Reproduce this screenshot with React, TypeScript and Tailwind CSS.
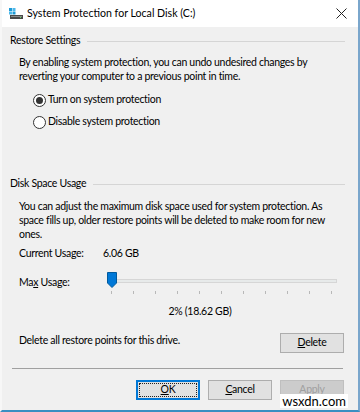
import React from "react";

const font = { fontFamily: 'Lato, "Liberation Sans", sans-serif' };

const GroupTitle = ({ label }: { label: string }) => (
  <div className="flex items-center gap-[7px] h-[16px]">
    <span className="whitespace-nowrap">{label}</span>
    <div className="flex-1 h-px bg-[#d5d5d5] mr-[13px]" />
  </div>
);

const Radio = ({ checked, label }: { checked?: boolean; label: string }) => (
  <div className="flex items-center gap-[2px] h-[16px]">
    <span className="w-[13px] h-[13px] rounded-full border border-[#333] bg-white flex items-center justify-center">
      {checked && <span className="w-[7px] h-[7px] rounded-full bg-[#333]" />}
    </span>
    <span>{label}</span>
  </div>
);

const Btn = ({ children, focus, disabled }: { children: React.ReactNode; focus?: boolean; disabled?: boolean }) => (
  <div
    className={
      "w-[64px] h-[20px] flex items-center justify-center " +
      (focus
        ? "border-2 border-[#0078d7] bg-[#e1e1e1] outline-1 outline-dotted outline-[#222] -outline-offset-4"
        : disabled
        ? "border border-[#bfbfbf] bg-[#cccccc] text-[#a0a0a0]"
        : "border border-[#adadad] bg-[#e1e1e1]")
    }
  >
    {children}
  </div>
);

export default function App() {
  const ticks = Array.from({ length: 11 });
  return (
    <div
      style={font}
      className="w-[360px] h-[412px] bg-[#f0f0f0] text-[10.5px] tracking-[-0.3px] text-black flex flex-col border-l-2 border-l-[#f7f7f7] border-r-2 border-r-[#7aa6cc] border-b-2 border-b-[#3a8fc2] overflow-hidden relative"
    >
      <div className="h-[27px] bg-white flex items-center pl-[7px] pr-[8px] shrink-0 tracking-normal">
        <svg width="14" height="12" viewBox="0 0 14 12" className="mr-[4px]">
          <rect x="0" y="0" width="3" height="3" fill="#1e9ad6" />
          <rect x="3.5" y="0" width="3" height="3" fill="#4cb8ea" />
          <rect x="0" y="3.5" width="3" height="3" fill="#4cb8ea" />
          <rect x="3.5" y="3.5" width="3" height="3" fill="#1e9ad6" />
          <rect x="1" y="7" width="13" height="4" fill="#4a4a4a" />
          <rect x="2" y="8" width="11" height="1" fill="#8a8a8a" />
          <rect x="11" y="9" width="1" height="1" fill="#5ee05e" />
        </svg>
        <span className="text-[10.6px] text-black">System Protection for Local Disk (C:)</span>
        <svg width="11" height="11" viewBox="0 0 11 11" className="ml-auto mr-[3px]">
          <path d="M0.5 0.5 L10.5 10.5 M10.5 0.5 L0.5 10.5" stroke="#222" strokeWidth="1" />
        </svg>
      </div>

      <div className="flex flex-col pl-[8px] pt-[6px] flex-1 whitespace-nowrap">
        <GroupTitle label="Restore Settings" />
        <p className="ml-[9px] mt-[6px] leading-[14px]">
          By enabling system protection, you can undo undesired changes by
          <br />
          reverting your computer to a previous point in time.
        </p>
        <div className="ml-[23px] mt-[9px] flex flex-col gap-[6px]">
          <Radio checked label="Turn on system protection" />
          <Radio label="Disable system protection" />
        </div>

        <div className="mt-[46px]">
          <GroupTitle label="Disk Space Usage" />
        </div>
        <p className="ml-[9px] mt-[7px] leading-[14px]">
          You can adjust the maximum disk space used for system protection. As
          <br />
          space fills up, older restore points will be deleted to make room for new
          <br />
          ones.
        </p>
        <div className="ml-[9px] mt-[5px] flex h-[16px] items-center">
          <span className="w-[84px]">Current Usage:</span>
          <span>6.06 GB</span>
        </div>

        <div className="ml-[9px] mt-[12px] flex items-start">
          <span className="w-[88px] pt-[1px]">
            Ma<span className="underline">x</span> Usage:
          </span>
          <div className="flex flex-col w-[230px]">
            <div className="relative h-[14px] flex items-center">
              <div className="w-full h-[4px] bg-[#e7eaea] border border-[#d6d6d6]" />
              <svg width="10" height="16" viewBox="0 0 10 16" className="absolute left-0 top-[-2px]">
                <path d="M0.5 0.5 H9.5 V11 L5 15.5 L0.5 11 Z" fill="#0078d7" stroke="#005a9e" />
              </svg>
            </div>
            <div className="flex justify-between mt-[3px] pl-[4px] pr-[5px]">
              {ticks.map((_, i) => (
                <span key={i} className="w-px h-[3px] bg-[#b8b8b8]" />
              ))}
            </div>
            <div className="text-center mt-[10px] h-[16px] pr-[44px]">2% (18.62 GB)</div>
          </div>
        </div>

        <div className="ml-[9px] mt-[11px] flex items-start pr-[14px]">
          <span className="pt-[2px]">Delete all restore points for this drive.</span>
          <div className="ml-auto mt-[2px]">
            <Btn>
              <span><span className="underline">D</span>elete</span>
            </Btn>
          </div>
        </div>

        <div className="h-px bg-[#a0a0a0] mt-[15px] mr-[15px] ml-[2px]" />

        <div className="flex justify-end gap-[8px] mt-[11px] pr-[14px]">
          <Btn focus>
            <span><span className="underline">O</span>K</span>
          </Btn>
          <Btn>
            <span><span className="underline">C</span>ancel</span>
          </Btn>
          <Btn disabled>
            <span><span className="underline">A</span>pply</span>
          </Btn>
        </div>
      </div>

      <div className="absolute right-[10px] bottom-[2px] bg-white text-[13px] leading-[14px] px-[2px] tracking-normal">wsxdn.com</div>
    </div>
  );
}
